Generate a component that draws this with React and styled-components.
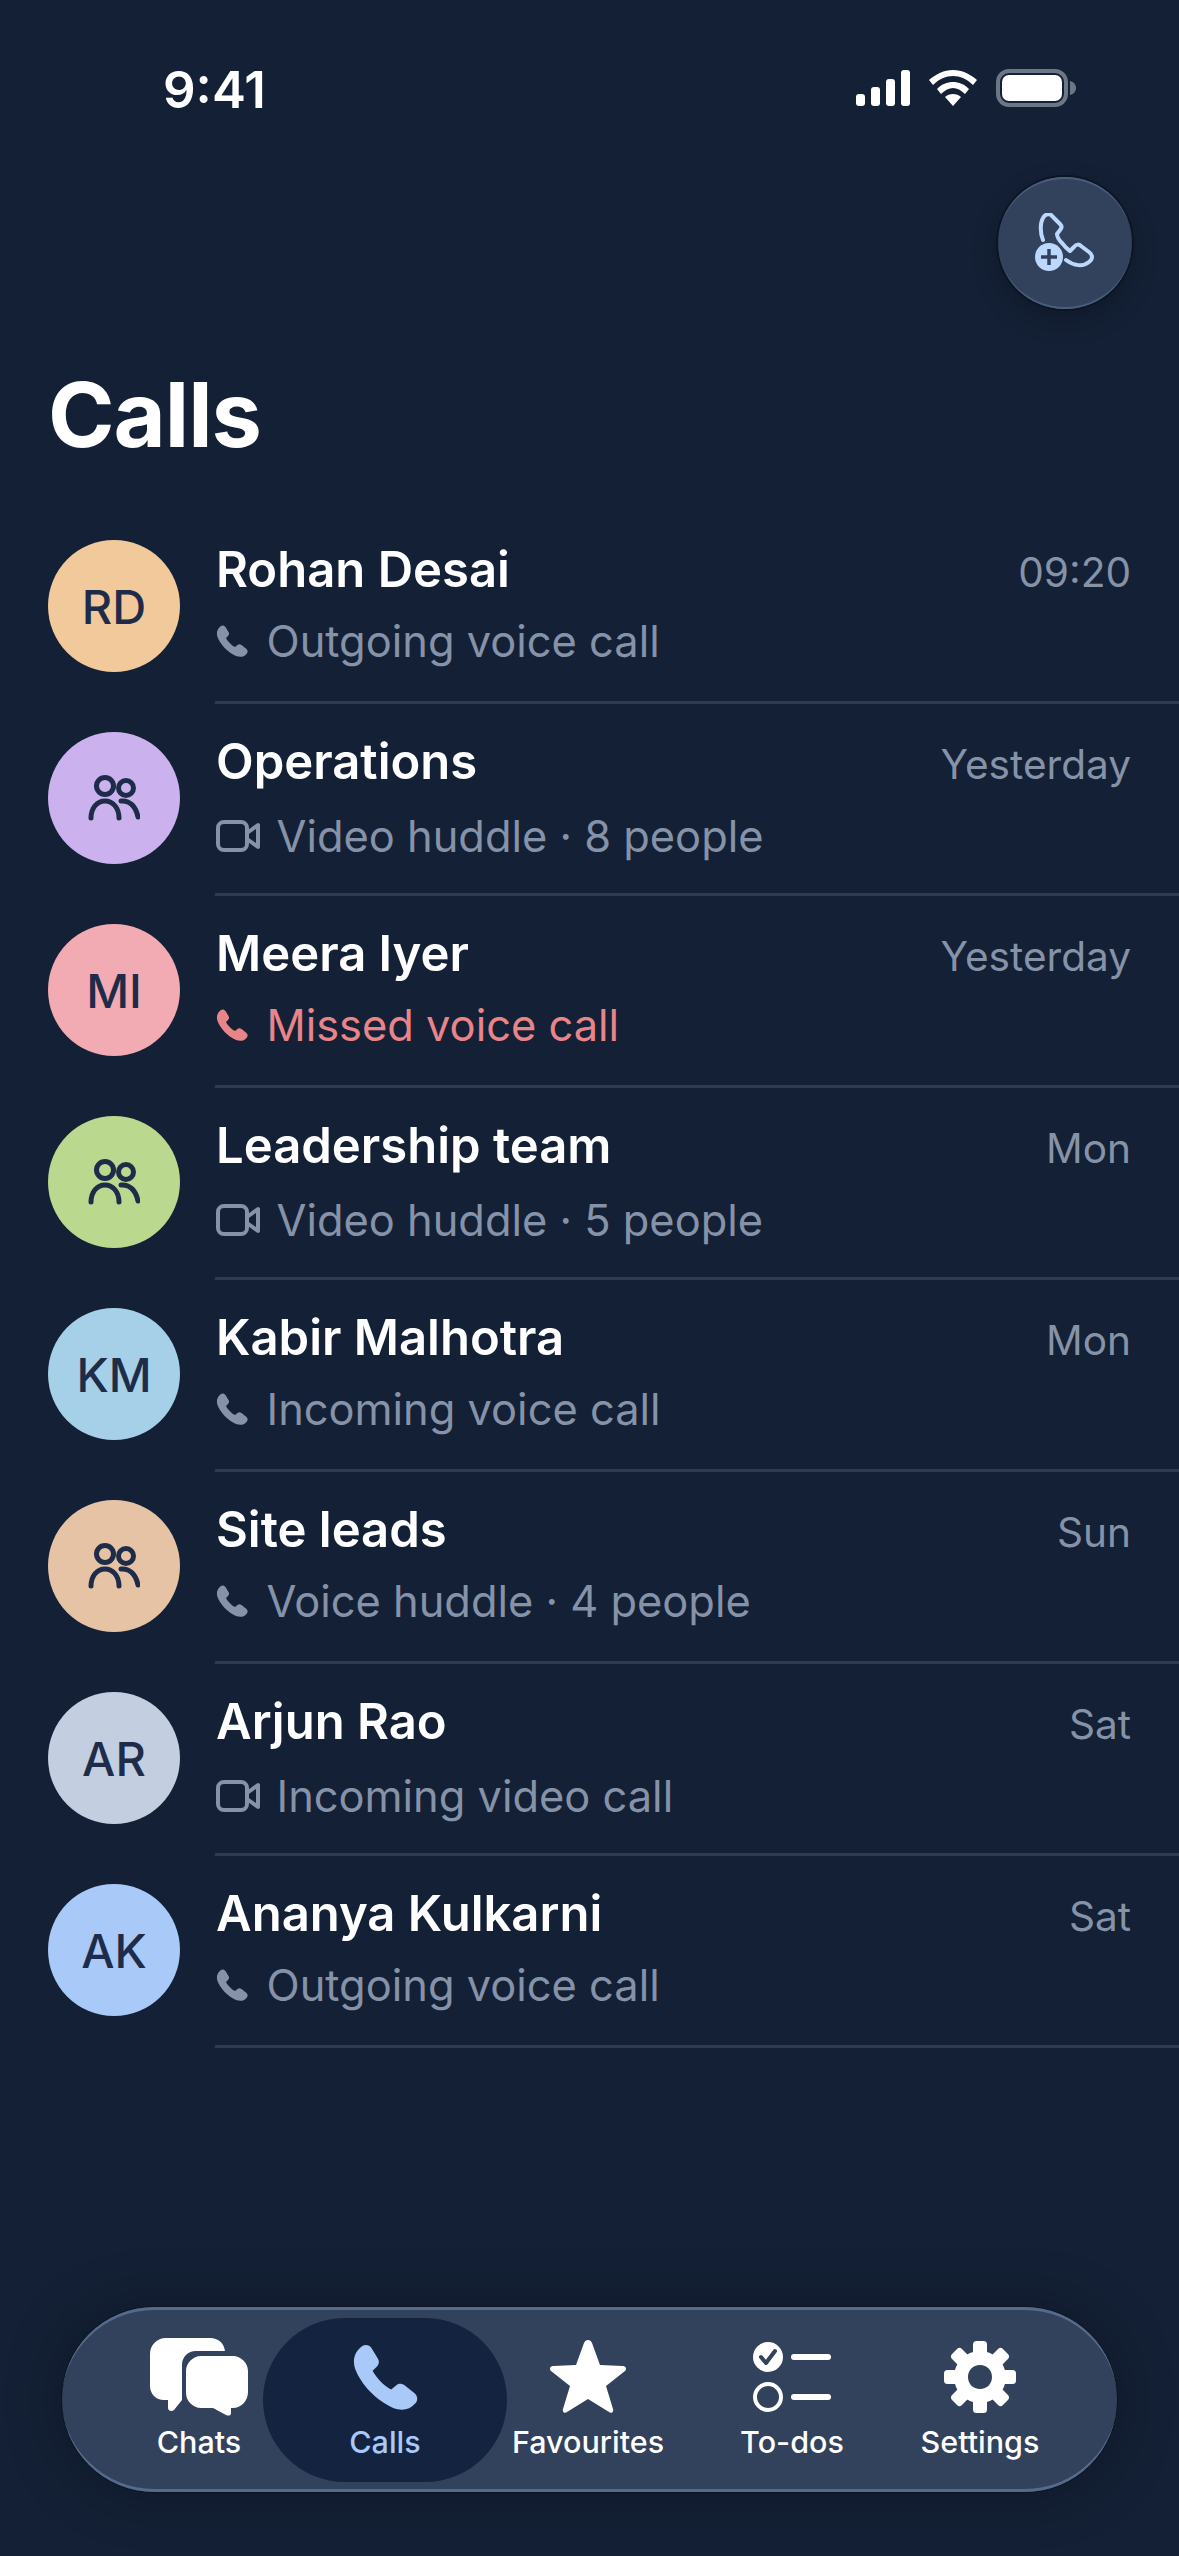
import React from 'react';
import styled, { createGlobalStyle } from 'styled-components';

const Global = createGlobalStyle`
  html, body { margin: 0; padding: 0; background: #142035; }
  body { font-family: Inter, "Liberation Sans", sans-serif; }
`;

const Screen = styled.div`
  width: 1179px;
  height: 2556px;
  background: #142035;
  color: #fff;
  display: flex;
  flex-direction: column;
  overflow: hidden;
`;

const StatusBar = styled.div`
  height: 177px;
  flex: none;
  box-sizing: border-box;
  padding: 62px 103px 0 163px;
  display: flex;
  justify-content: space-between;
  align-items: flex-start;
`;

const Clock = styled.div`
  font-size: 51px;
  line-height: 56px;
  font-weight: 600;
`;

const StatusIcons = styled.div`
  display: flex;
  align-items: center;
  gap: 19px;
  margin-top: 7px;
`;

const ActionRow = styled.div`
  display: flex;
  justify-content: flex-end;
  padding-right: 47px;
  flex: none;
`;

const RoundButton = styled.button`
  width: 134px;
  height: 132px;
  padding: 0;
  border: 0;
  border-radius: 50%;
  background: #32415c;
  display: flex;
  align-items: center;
  justify-content: center;
  box-shadow: inset 0 3px 1px -1px #4c5f7e, inset 0 -3px 1px -1px #4c5f7e, 0 0 0 2px #0c1524, 0 10px 24px rgba(8, 14, 26, 0.35);
`;

const Title = styled.h1`
  margin: 52px 0 0 48px;
  font-size: 90px;
  line-height: 107px;
  font-weight: 700;
  letter-spacing: -1px;
`;

const List = styled.div`
  margin-top: 44px;
  display: flex;
  flex-direction: column;
`;

const Row = styled.div`
  height: 192px;
  display: flex;
  padding-left: 48px;
  gap: 35px;
`;

const Avatar = styled.div`
  width: 132px;
  height: 132px;
  margin-top: 28px;
  flex: none;
  border-radius: 50%;
  background: ${(p) => p.$bg};
  color: #1e2c4a;
  font-size: 47px;
  font-weight: 550;
  display: flex;
  align-items: center;
  justify-content: center;
`;

const RowBody = styled.div`
  flex: 1;
  box-sizing: border-box;
  border-bottom: 3px solid #2c3a55;
  padding: 28px 48px 0 1px;
  display: flex;
  justify-content: space-between;
  align-items: flex-start;
`;

const Name = styled.div`
  font-size: 49px;
  line-height: 60px;
  font-weight: 600;
`;

const Sub = styled.div`
  margin-top: ${(p) => (p.$video ? '13.5px' : '10.5px')};
  display: flex;
  align-items: center;
  gap: ${(p) => (p.$video ? '16.5px' : '18.5px')};
  font-size: 43.4px;
  line-height: 60px;
  color: ${(p) => (p.$missed ? '#e98589' : '#8592a8')};
`;

const When = styled.div`
  font-size: 40.6px;
  line-height: 60px;
  color: #8592a8;
  margin-top: 3px;
`;

const TabBar = styled.nav`
  margin: auto 62px 64px;
  height: 185px;
  flex: none;
  box-sizing: border-box;
  padding: 11px 0 0 73px;
  border-radius: 93px;
  background: #32415c;
  display: grid;
  grid-template-columns: 128px 244px 162px 246px 130px;
  grid-template-rows: 164px;
  box-shadow: inset 0 4px 0 -1px #566b8c, inset 0 -4px 0 -1px #566b8c, 0 0 0 1px #0c1524, 0 0 50px rgba(9, 15, 27, 0.5);
`;

const Tab = styled.div`
  border-radius: 82px;
  background: ${(p) => (p.$active ? '#14233f' : 'transparent')};
  color: ${(p) => (p.$active ? '#a9c9f8' : '#fff')};
  position: relative;
  display: flex;
  flex-direction: column;
  align-items: center;
`;

const TabIcon = styled.div`
  height: 84px;
  margin-top: 17px;
  display: flex;
  align-items: center;
  justify-content: center;
`;

const TabLabel = styled.div`
  font-size: 30.5px;
  line-height: 36px;
  font-weight: 500;
  white-space: nowrap;
  margin-top: 4.5px;
`;

const PHONE =
  'M10 2C13 0 17 1 19 4L25 14C27 17 26 20 24 22L20 26C23 32 31 41 38 44L43 40C45 38 48 38 51 40L61 48C64 51 64 55 61 58C56 64 48 65 40 62C24 55 9 40 3 24C0 15 3 7 10 2Z';

const PhoneIcon = ({ size }) => (
  <svg width={size} height={size} viewBox="0 0 64 64" fill="currentColor">
    <path d={PHONE} />
  </svg>
);

const VideoIcon = () => (
  <svg width="44" height="32" viewBox="0 0 44 32" fill="none" stroke="currentColor" strokeWidth="4" strokeLinejoin="round">
    <rect x="2" y="2" width="29" height="28" rx="6" />
    <path d="M31 13L42 5V27L31 19Z" />
  </svg>
);

const GroupIcon = () => (
  <svg width="52" height="46" viewBox="0 0 52 46" fill="none" stroke="#1e2c4a" strokeWidth="5" strokeLinecap="round">
    <circle cx="17" cy="11" r="8.5" />
    <circle cx="38" cy="13" r="7.5" />
    <path d="M3 43C3 33 9 26 17 26C25 26 31 33 31 43" />
    <path d="M33 26C42 25 48 32 50 42" />
  </svg>
);

const AddCallIcon = () => (
  <svg width="60" height="60" viewBox="0 0 60 60" fill="none" stroke="#bcd8fb" strokeWidth="4" strokeLinejoin="round">
    <path d="M8 27C5 20 5 10 8 5C10 1 15 0 17 3L25 11C27 13 27 15 25 17L22 21C22 24 24 27 27 30C30 34 32 36 35 38L39 34C41 31 44 31 46 33L54 39C58 42 58 46 54 49C48 54 39 53 31 47" strokeLinecap="round" />
    <circle cx="14" cy="44" r="14" fill="#bcd8fb" stroke="none" />
    <path d="M14 36V52M6 44H22" stroke="#32415c" strokeWidth="3.5" />
  </svg>
);

const SignalIcon = () => (
  <svg width="54" height="36" viewBox="0 0 54 36" fill="#fff">
    <rect x="0" y="24" width="9" height="12" rx="3" />
    <rect x="15" y="17" width="9" height="19" rx="3" />
    <rect x="30" y="9" width="9" height="27" rx="3" />
    <rect x="45" y="0" width="9" height="36" rx="3" />
  </svg>
);

const WifiIcon = () => (
  <svg width="48" height="36" viewBox="0 0 48 36" fill="#fff">
    <path d="M24 0C33 0 41 4 48 10L44 15C38 9 31 6 24 6C17 6 10 9 4 15L0 10C7 4 15 0 24 0Z" />
    <path d="M24 12C30 12 35 14 40 19L36 24C32 20 28 18 24 18C20 18 16 20 12 24L8 19C13 14 18 12 24 12Z" />
    <path d="M24 24C27 24 30 25 32 27L24 36L16 27C18 25 21 24 24 24Z" />
  </svg>
);

const BatteryIcon = () => (
  <svg width="80" height="38" viewBox="0 0 80 38" fill="none">
    <rect x="2" y="2" width="68" height="34" rx="11" stroke="#6b7686" strokeWidth="4" />
    <rect x="6" y="6" width="60" height="26" rx="7" fill="#fff" />
    <path d="M74 12C78 13 80 16 80 19C80 22 78 25 74 26Z" fill="#6b7686" />
  </svg>
);

const ChatsIcon = () => (
  <svg width="98" height="78" viewBox="0 0 98 78" fill="#fff">
    <path d="M16 0H60C68 0 74 5 75 13H46C38 13 32 19 32 27V62L24 72C22 74 18 73 18 70V62H14C6 62 0 56 0 48V16C0 7 7 0 16 0Z" />
    <path d="M51 18H83C91 18 98 25 98 33V54C98 63 91 70 83 70H81V75C81 78 78 78 76 77L63 70H51C43 70 36 63 36 55V33C36 25 43 18 51 18Z" />
  </svg>
);

const StarIcon = () => (
  <svg width="76" height="74" viewBox="0 0 76 74" fill="#fff">
    <path d="M38 0C40 0 41 1 42 3L50 25L73 26C76 26 77 29 75 31L56 46L63 69C64 72 61 74 59 72L38 59L17 72C15 74 12 72 13 69L20 46L1 31C-1 29 0 26 3 26L26 25L34 3C35 1 36 0 38 0Z" />
  </svg>
);

const TodosIcon = () => (
  <svg width="78" height="70" viewBox="0 0 78 70">
    <circle cx="15" cy="15" r="15" fill="#fff" />
    <path d="M8 15L13 21L22 9" fill="none" stroke="#32415c" strokeWidth="4" strokeLinecap="round" strokeLinejoin="round" />
    <circle cx="15" cy="55" r="13" fill="none" stroke="#fff" strokeWidth="4" />
    <rect x="38" y="12" width="40" height="6" rx="3" fill="#fff" />
    <rect x="38" y="52" width="40" height="6" rx="3" fill="#fff" />
  </svg>
);

const GearIcon = () => {
  const teeth = [0, 45, 90, 135, 180, 225, 270, 315];
  return (
    <svg width="72" height="72" viewBox="0 0 72 72" fill="#fff">
      <path
        fillRule="evenodd"
        d="M36 10C50 10 62 22 62 36C62 50 50 62 36 62C22 62 10 50 10 36C10 22 22 10 36 10ZM36 24C29 24 24 29 24 36C24 43 29 48 36 48C43 48 48 43 48 36C48 29 43 24 36 24Z"
      />
      {teeth.map((a) => (
        <rect key={a} x="29" y="0" width="14" height="15" rx="3.5" transform={`rotate(${a} 36 36)`} />
      ))}
    </svg>
  );
};

const calls = [
  { name: 'Rohan Desai', text: 'RD', bg: '#f1c99b', sub: 'Outgoing voice call', when: '09:20' },
  { name: 'Operations', bg: '#cbb2ee', sub: 'Video huddle · 8 people', when: 'Yesterday', video: true },
  { name: 'Meera Iyer', text: 'MI', bg: '#f2abb2', sub: 'Missed voice call', when: 'Yesterday', missed: true },
  { name: 'Leadership team', bg: '#bbd88f', sub: 'Video huddle · 5 people', when: 'Mon', video: true },
  { name: 'Kabir Malhotra', text: 'KM', bg: '#a6d0e8', sub: 'Incoming voice call', when: 'Mon' },
  { name: 'Site leads', bg: '#e7c3a6', sub: 'Voice huddle · 4 people', when: 'Sun' },
  { name: 'Arjun Rao', text: 'AR', bg: '#c3cee0', sub: 'Incoming video call', when: 'Sat', video: true },
  { name: 'Ananya Kulkarni', text: 'AK', bg: '#a9c9f8', sub: 'Outgoing voice call', when: 'Sat' },
];

const tabs = [
  { label: 'Chats', icon: <ChatsIcon /> },
  { label: 'Calls', icon: <PhoneIcon size={66} />, active: true },
  { label: 'Favourites', icon: <StarIcon /> },
  { label: 'To-dos', icon: <TodosIcon /> },
  { label: 'Settings', icon: <GearIcon /> },
];

export default function App() {
  return (
    <Screen>
      <Global />
      <StatusBar>
        <Clock>9:41</Clock>
        <StatusIcons>
          <SignalIcon />
          <WifiIcon />
          <BatteryIcon />
        </StatusIcons>
      </StatusBar>
      <ActionRow>
        <RoundButton>
          <AddCallIcon />
        </RoundButton>
      </ActionRow>
      <Title>Calls</Title>
      <List>
        {calls.map((c) => (
          <Row key={c.name}>
            <Avatar $bg={c.bg}>{c.text || <GroupIcon />}</Avatar>
            <RowBody>
              <div>
                <Name>{c.name}</Name>
                <Sub $video={c.video} $missed={c.missed}>
                  {c.video ? <VideoIcon /> : <PhoneIcon size={32} />}
                  {c.sub}
                </Sub>
              </div>
              <When>{c.when}</When>
            </RowBody>
          </Row>
        ))}
      </List>
      <TabBar>
        {tabs.map((t) => (
          <Tab key={t.label} $active={t.active}>
            <TabIcon>{t.icon}</TabIcon>
            <TabLabel>{t.label}</TabLabel>
          </Tab>
        ))}
      </TabBar>
    </Screen>
  );
}
